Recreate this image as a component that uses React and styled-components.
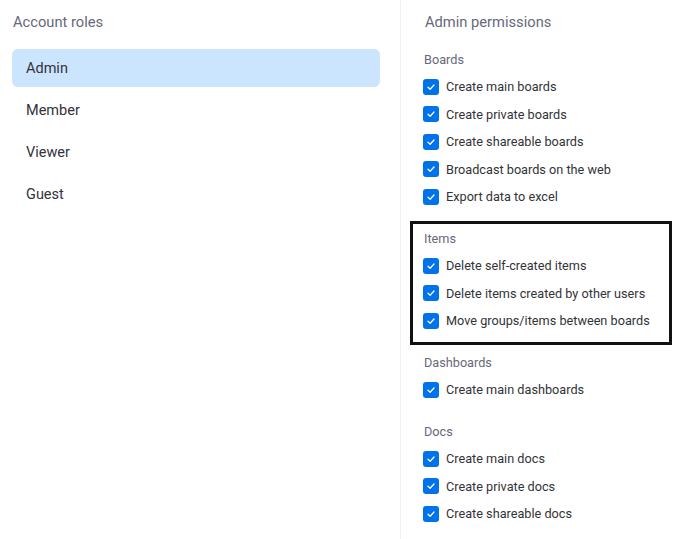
import styled, { createGlobalStyle } from "styled-components";

const GlobalStyle = createGlobalStyle`
    html, body {
        margin: 0;
        padding: 0;
        background: #ffffff;
    }

    body {
        font-family: Roboto, "Liberation Sans", sans-serif;
        color: #323338;
    }
`

const Layout = styled.div`
    display: flex;
    min-height: 100vh;
    width: 692px;
`

const RolesPanel = styled.aside`
    width: 401px;
    box-sizing: border-box;
    padding: 11px 20px 0 12px;
    border-right: 1px solid #eef0f3;
`

const PermissionsPanel = styled.section`
    flex: 1;
    box-sizing: border-box;
    padding: 11px 20px 0 23px;
`

const PanelTitle = styled.h2`
    margin: 0 0 ${props => props.$gap || 18}px 1px;
    font-size: 14.7px;
    line-height: 22px;
    font-weight: 400;
    color: #676879;
`

const RoleList = styled.ul`
    list-style: none;
    margin: 0;
    padding: 0;
    display: flex;
    flex-direction: column;
    gap: 4px;
`

const RoleItem = styled.li`
    height: 38px;
    display: flex;
    align-items: center;
    padding-left: 14px;
    border-radius: 6px;
    font-size: 14.5px;
    color: #323338;
    background: ${props => props.$selected ? "#cce5ff" : "transparent"};
    cursor: pointer;
`

const Group = styled.div`
    position: relative;
    margin-bottom: 19.5px;

    ${props => props.$highlighted && `
        &::after {
            content: "";
            position: absolute;
            top: -9px;
            bottom: -10px;
            left: -14px;
            right: 0;
            border: 3px solid #111111;
            pointer-events: none;
        }
    `}
`

const GroupTitle = styled.div`
    font-size: 12.7px;
    line-height: 18px;
    color: #676879;
    margin-bottom: 4px;
`

const Option = styled.label`
    height: 27.5px;
    display: flex;
    align-items: center;
    gap: 7px;
    font-size: 12.7px;
    color: #323338;
    white-space: nowrap;
`

const Box = styled.span`
    width: 16px;
    height: 16px;
    margin-left: -1px;
    flex-shrink: 0;
    border-radius: 3px;
    background: #0073ea;
    display: flex;
    align-items: center;
    justify-content: center;
`

const roles = ["Admin", "Member", "Viewer", "Guest"];

const groups = [
    {
        title: "Boards",
        items: ["Create main boards", "Create private boards", "Create shareable boards", "Broadcast boards on the web", "Export data to excel"],
    },
    {
        title: "Items",
        highlighted: true,
        items: ["Delete self-created items", "Delete items created by other users", "Move groups/items between boards"],
    },
    {
        title: "Dashboards",
        items: ["Create main dashboards"],
    },
    {
        title: "Docs",
        items: ["Create main docs", "Create private docs", "Create shareable docs"],
    },
];

const Check = () => (
    <Box>
        <svg width="10" height="10" viewBox="0 0 10 10" fill="none">
            <path d="M2 5.2 L4.1 7.2 L8 3" stroke="#ffffff" strokeWidth="1.3" strokeLinecap="round" strokeLinejoin="round" />
        </svg>
    </Box>
)

const App = () => {
    return (
        <Layout>
            <GlobalStyle />
            <RolesPanel>
                <PanelTitle $gap={16}>Account roles</PanelTitle>
                <RoleList>
                    {roles.map(role => (
                        <RoleItem key={role} $selected={role === "Admin"}>{role}</RoleItem>
                    ))}
                </RoleList>
            </RolesPanel>
            <PermissionsPanel>
                <PanelTitle>Admin permissions</PanelTitle>
                {groups.map(group => (
                    <Group key={group.title} $highlighted={group.highlighted}>
                        <GroupTitle>{group.title}</GroupTitle>
                        {group.items.map(item => (
                            <Option key={item}>
                                <Check />
                                {item}
                            </Option>
                        ))}
                    </Group>
                ))}
            </PermissionsPanel>
        </Layout>
    )
}

export default App;
